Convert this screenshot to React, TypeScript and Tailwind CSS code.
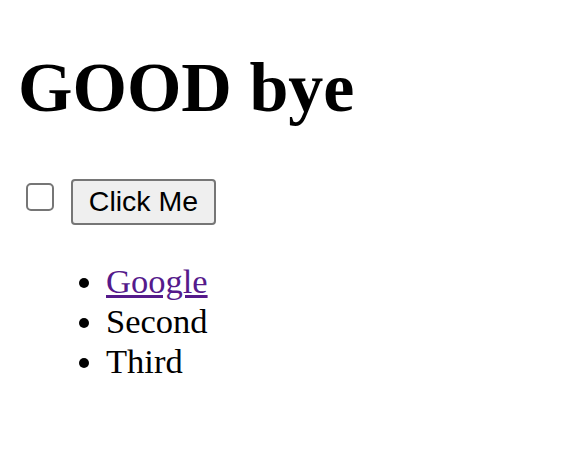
export default function App() {
  return (
    <div className="min-h-screen bg-white px-[17px] pt-[49px] font-['Liberation_Serif',serif] text-[34px] text-black">
      <h1 className="ml-[1px] text-[70px] font-bold leading-[78px]">GOOD bye</h1>

      <div className="mt-[42px] flex items-start">
        <div className="ml-[9px] mt-[14px] h-[28px] w-[28px] rounded-[5px] border-2 border-[#767676] bg-white" />
        <button className="ml-[17px] mt-[10px] flex h-[46px] w-[145px] items-center justify-center rounded-[4px] border-2 border-[#767676] bg-[#efefef] pb-[2px] font-['Liberation_Sans',sans-serif] text-[28.5px] leading-none text-black">
          Click Me
        </button>
      </div>

      <ul className="mt-[36px] list-disc pl-[89px] text-[34.5px] leading-[40px]">
        <li>
          <a href="#" className="text-[#551a8b] underline">
            Google
          </a>
        </li>
        <li>Second</li>
        <li>Third</li>
      </ul>
    </div>
  );
}
